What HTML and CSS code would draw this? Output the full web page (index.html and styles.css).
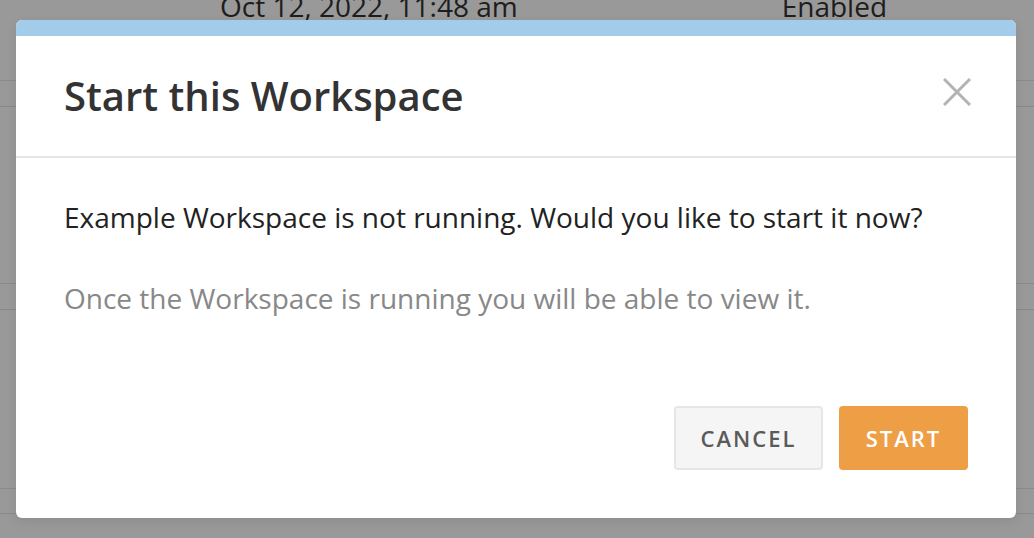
FILE: index.html
```html
<!DOCTYPE html>
<html lang="en">
<head>
<meta charset="utf-8">
<title>Start this Workspace</title>
<link rel="stylesheet" href="styles.css">
</head>
<body>
<div class="page">
  <div class="row row-first">
    <span class="cell cell-date">Oct 12, 2022, 11:48 am</span>
    <span class="cell cell-status">Enabled</span>
  </div>
  <div class="strip"></div>
  <div class="row row-mid"></div>
  <div class="strip"></div>
  <div class="row row-last"></div>
  <div class="strip strip-last"></div>
  <div class="footer-area"></div>
</div>

<div class="overlay">
  <div class="modal" role="dialog" aria-labelledby="modal-title">
    <div class="modal-accent"></div>
    <div class="modal-header">
      <h2 id="modal-title" class="modal-title">Start this Workspace</h2>
      <button class="modal-close" aria-label="Close">
        <svg viewBox="0 0 28 28" width="28" height="28" aria-hidden="true">
          <path d="M1 1 L27 27 M27 1 L1 27" stroke="#b3b3b3" stroke-width="3" fill="none"/>
        </svg>
      </button>
    </div>
    <div class="modal-body">
      <p class="modal-text">Example Workspace is not running. Would you like to start it now?</p>
      <p class="modal-note">Once the Workspace is running you will be able to view it.</p>
    </div>
    <div class="modal-footer">
      <button class="btn btn-cancel">CANCEL</button>
      <button class="btn btn-start">START</button>
    </div>
  </div>
</div>
</body>
</html>
```

FILE: styles.css
```css
* { box-sizing: border-box; }
html, body { margin: 0; padding: 0; }
body {
  width: 1034px;
  height: 538px;
  overflow: hidden;
  font-family: "Open Sans", "Noto Sans", sans-serif;
  background: #ffffff;
  position: relative;
}

.page {
  display: flex;
  flex-direction: column;
  height: 538px;
}
.row { border-bottom: 1px solid #e4e4e4; }
.row-first {
  height: 81px;
  display: flex;
  font-size: 28px;
  color: #333;
  line-height: 1;
}
.cell { display: block; margin-top: -8px; white-space: nowrap; }
.cell-date { margin-left: 220px; }
.cell-status { margin-left: 264px; }
.strip { height: 26px; border-bottom: 1px solid #e4e4e4; }
.strip-last { height: 25px; }
.row-mid { height: 177px; }
.row-last { height: 179px; }
.footer-area { flex: 1; }

.overlay {
  position: absolute;
  inset: 0;
  background: rgba(0, 0, 0, 0.4);
  display: flex;
  align-items: center;
  padding-left: 16px;
}

.modal {
  width: 1000px;
  height: 498px;
  background: #fff;
  border-radius: 6px;
  overflow: hidden;
  display: flex;
  flex-direction: column;
  box-shadow: 0 4px 12px rgba(0, 0, 0, 0.08);
}
.modal-accent {
  height: 16px;
  background: #a3cbea;
}
.modal-header {
  height: 122px;
  border-bottom: 2px solid #e5e5e5;
  display: flex;
  align-items: center;
  justify-content: space-between;
  padding: 0 45px 0 48px;
}
.modal-title {
  margin: 0;
  font-size: 40px;
  font-weight: 600;
  color: #333;
  line-height: 1;
}
.modal-close {
  border: 0;
  background: none;
  padding: 0;
  width: 28px;
  height: 28px;
  display: flex;
  margin-top: -8px;
}
.modal-body {
  padding: 40px 48px 0;
  flex: 1;
}
.modal-text {
  margin: 0;
  font-size: 28px;
  line-height: 1.4;
  color: #222;
}
.modal-note {
  margin: 42px 0 0;
  font-size: 28px;
  line-height: 1.4;
  color: #888;
}
.modal-footer {
  display: flex;
  justify-content: flex-end;
  gap: 16px;
  padding: 0 48px 48px;
}
.btn {
  height: 64px;
  border-radius: 4px;
  font-family: "Open Sans", "Noto Sans", sans-serif;
  font-size: 22px;
  font-weight: 600;
  letter-spacing: 2px;
  padding: 0;
}
.btn-cancel {
  width: 149px;
  background: #f5f5f5;
  border: 2px solid #e6e6e6;
  color: #5a5a5a;
}
.btn-start {
  width: 129px;
  background: #ee9e45;
  border: 0;
  color: #fff;
}
```
